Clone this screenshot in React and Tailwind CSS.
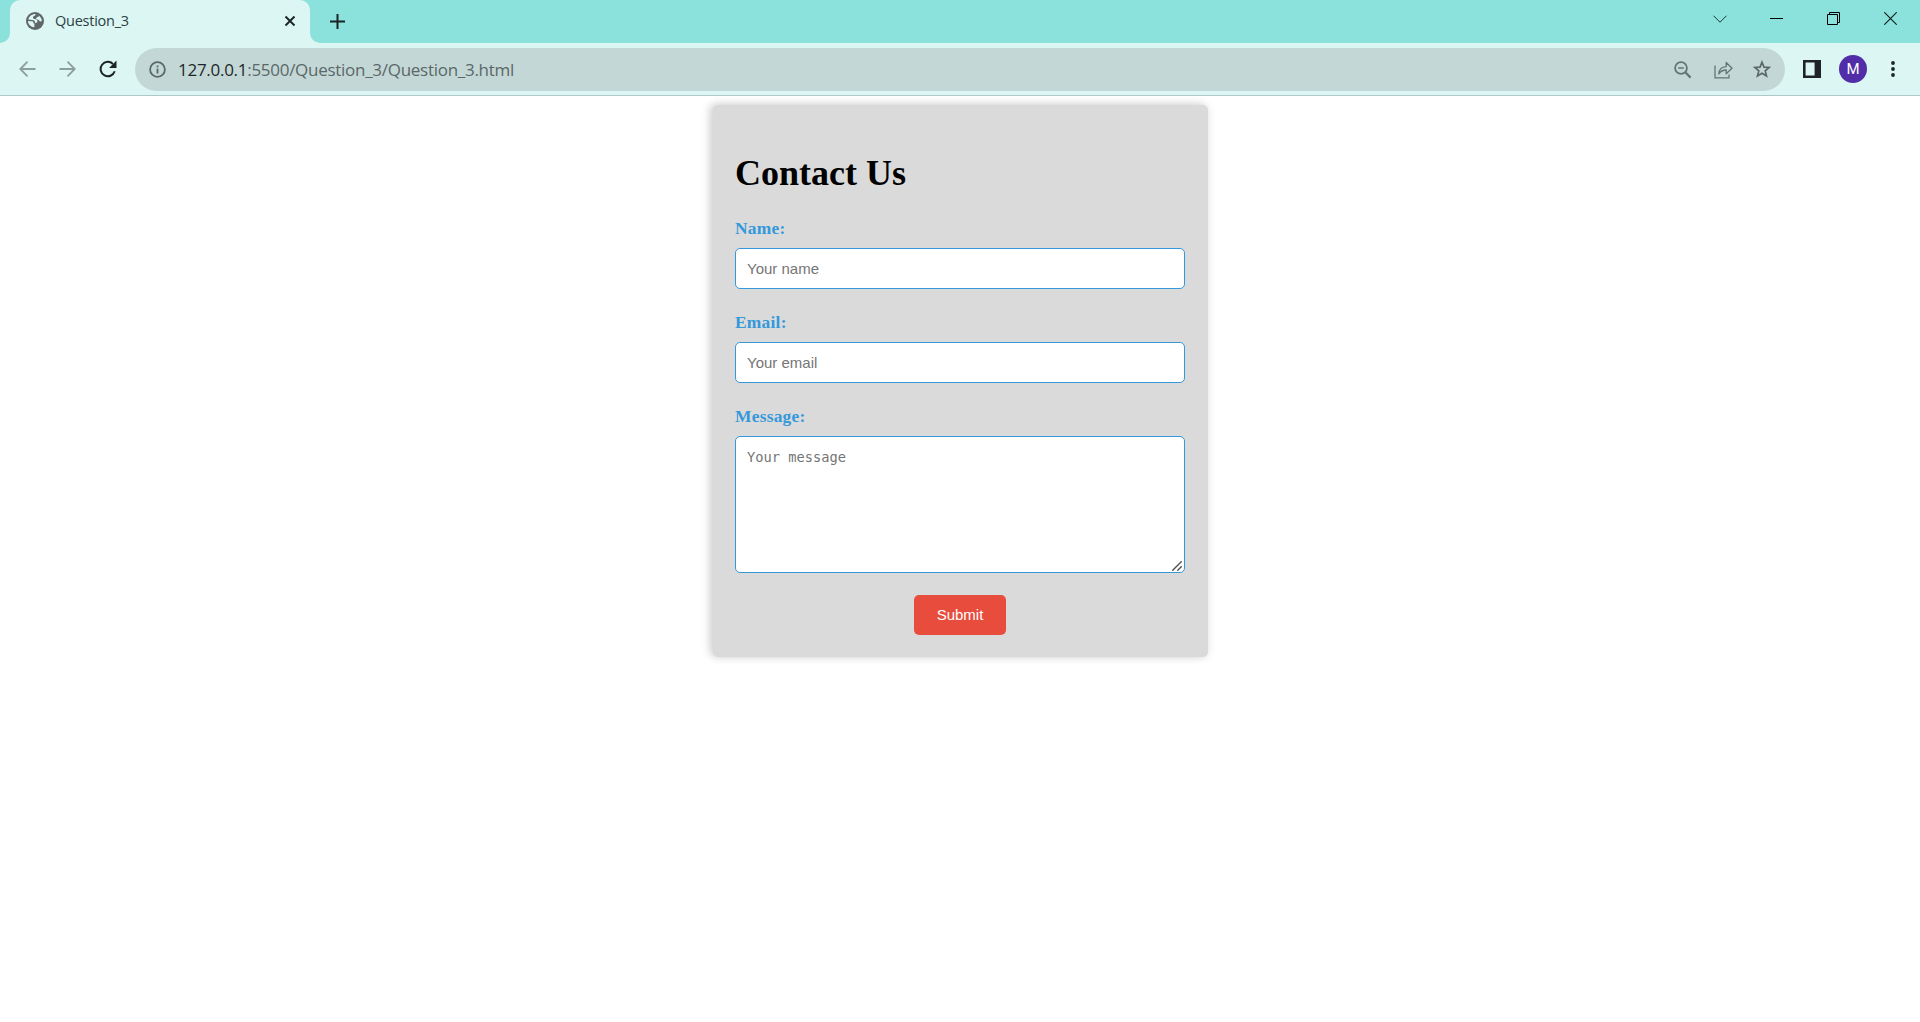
const uiFont = "font-['Open_Sans','Noto_Sans',sans-serif]";

function TabStrip() {
  return (
    <div className="flex h-[43px] items-end bg-[#8be1db]">
      <div className="h-[43px] w-[10px] bg-[#dcf6f4]">
        <div className="h-full rounded-br-[10px] bg-[#8be1db]" />
      </div>
      <div className="flex h-[43px] w-[300px] items-center rounded-t-[10px] bg-[#dcf6f4] pr-[13px] pb-px pl-[16px]">
        <svg width="18" height="18" viewBox="0 0 18 18" className="shrink-0">
          <circle cx="9" cy="9" r="9" fill="#5f6569" />
          <path d="M9.600 2c-.2 1-.5 1.700-1.300 2.100-.9.400-1.300.7-1.300 1.500 0 .9.500 1.300 1.500 1.400 1.900.1 2.800.8 2.900 2.200.1 1-.5 1.500-1.500 1.600-.9.100-1.500.6-1.500 1.700v2.700C4.700 15 2.100 12.600 2 9l3.400.2c1.300 0 1.900.4 1.900 1.300 0 .7.400 1 1 1 .6 0 .8-.4.8-1-.1-1.600-1-2.400-2.600-2.500L2.300 7.500C3 4.400 5.700 2 9.600 2z" fill="#dcf6f4" />
          <path d="M12.600 3.400c2 1.300 3.200 3.300 3.300 5.600-.9.600-2 .5-2.600-.3-.5-.8-1.300-1-2.200-1.200-.9-.3-1.200-1-.8-1.700.4-.6 1-.6 1.600-.8.700-.2.900-.7.700-1.600z" fill="#dcf6f4" />
        </svg>
        <span className={`ml-[11px] flex-1 text-[14.5px] leading-5 tracking-[-0.250px] text-[#2c3f3f] ${uiFont}`}>Question_3</span>
        <svg width="14" height="14" viewBox="0 0 14 14" stroke="#1b2424" strokeWidth="1.9">
          <path d="M2.500 2.500l9 9M11.500 2.500l-9 9" />
        </svg>
      </div>
      <div className="h-[43px] w-[10px] bg-[#dcf6f4]">
        <div className="h-full rounded-bl-[10px] bg-[#8be1db]" />
      </div>
      <div className="flex h-[43px] flex-1 items-center justify-between pl-[10px]">
        <svg width="15" height="15" viewBox="0 0 15 15" stroke="#1b2424" strokeWidth="2" className="-mt-px">
          <path d="M7.500 0v15M0 7.500h15" />
        </svg>
        <div className="flex h-[37px] self-start">
          <div className="flex w-[57px] items-center justify-center">
            <svg width="14" height="8" viewBox="0 0 14 8" fill="none" stroke="#1d3b39" strokeWidth="1"><path d="M.5.700L7 7.200 13.500.700" /></svg>
          </div>
          <div className="flex w-[57px] items-center justify-center">
            <div className="h-px w-[13px] bg-black" />
          </div>
          <div className="flex w-[57px] items-center justify-center">
            <svg width="13" height="13" viewBox="0 0 13 13" fill="none" stroke="#000" strokeWidth="1">
              <path d="M.5 2.500h10v10H.5zM2.500 2.500v-2h10v10h-2" />
            </svg>
          </div>
          <div className="flex w-[57px] items-center justify-center">
            <svg width="13" height="13" viewBox="0 0 13 13" fill="none" stroke="#0c1c1b" strokeWidth="1.100">
              <path d="M.3.300l12.400 12.400M12.700.300L.3 12.700" />
            </svg>
          </div>
          <div className="w-px" />
        </div>
      </div>
    </div>
  );
}

function Toolbar() {
  return (
    <div className="flex h-[53px] items-start border-b border-[#afc9c8] bg-[#dcf6f4] pt-[5px]">
      <div className="flex h-[43px] w-[135px] shrink-0 items-center pl-[19px]">
        <svg width="17" height="16" viewBox="0 0 17 16" fill="none" stroke="#8c9e9e" strokeWidth="1.800" className="-mt-0.5">
          <path d="M16.500 8H1.500M8.500.700L1.300 8l7.200 7.300" />
        </svg>
        <svg width="17" height="16" viewBox="0 0 17 16" fill="none" stroke="#8c9e9e" strokeWidth="1.800" className="-mt-0.5 ml-[23px]">
          <path d="M.5 8h15M8.500.700L15.700 8l-7.200 7.300" />
        </svg>
        <svg width="18" height="18" viewBox="0 0 18 18" fill="none" className="-mt-0.5 ml-[23px]">
          <path d="M15.700 11.300A7.200 7.200 0 1 1 14 4" stroke="#1b2424" strokeWidth="2" />
          <path d="M17.500.600v7.400h-7.400z" fill="#1b2424" />
        </svg>
      </div>
      <div className="flex h-[43px] w-[1650px] shrink-0 items-center rounded-full bg-[#c3d8d6] pr-[13px] pl-[14px]">
        <svg width="17" height="17" viewBox="0 0 17 17" fill="none" stroke="#5b6768" strokeWidth="1.800">
          <circle cx="8.500" cy="8.500" r="7.400" />
          <path d="M8.500 7.500v5M8.500 4.400v1.800" />
        </svg>
        <span className={`ml-[12px] flex-1 text-[17px] leading-6 tracking-[-0.280px] text-[#5b6768] ${uiFont}`}>
          <span className="text-[#1e2727]">127.0.0.1</span>:5500/Question_3/Question_3.html
        </span>
        <svg width="18" height="18" viewBox="0 0 18 18" fill="none" stroke="#657374" strokeWidth="1.800">
          <circle cx="7" cy="7" r="5.900" />
          <path d="M4.200 7h5.600" strokeWidth="1.500" />
          <path d="M11.300 11.300l5.300 5.300" strokeWidth="2.200" />
        </svg>
        <svg width="19" height="18" viewBox="0 0 19 18" fill="none" stroke="#657374" strokeWidth="1.300" className="ml-[22px]">
          <path d="M1 4.500v12.400h14v-3.400" />
          <path d="M4.800 13c.3-4.600 3-7.200 7.400-7.400V1.500L18 7.300l-5.800 5.500V9c-3.300 0-5.700 1.300-7.400 4z" strokeLinejoin="round" />
        </svg>
        <svg width="18" height="18" viewBox="0 0 18 18" fill="none" stroke="#5b6768" strokeWidth="1.700" className="-mt-px ml-[20px]">
          <path d="M9 2.200l2 4.900 5.200.4-4 3.400 1.300 5.100L9 13.200 4.500 16l1.300-5.100-4-3.400L7 7.100z" />
        </svg>
        <div className="w-px" />
      </div>
      <div className="flex h-[42px] flex-1 items-center pl-[18px]">
        <svg width="18" height="18" viewBox="0 0 18 18">
          <path d="M0 0h18v18H0zM2.600 2.600v12.800h9V2.600z" fillRule="evenodd" fill="#1d2326" />
        </svg>
        <div className="ml-[18px] flex size-[28px] items-center justify-center rounded-full bg-[#512da8] font-['Roboto',sans-serif] text-[15px] text-white">M</div>
        <svg width="4" height="16" viewBox="0 0 4 16" fill="#1d2326" className="ml-[24px]">
          <circle cx="2" cy="2" r="1.900" />
          <circle cx="2" cy="8" r="1.900" />
          <circle cx="2" cy="14" r="1.900" />
        </svg>
      </div>
    </div>
  );
}

const labelClass =
  "block h-[20px] pt-px font-['Liberation_Serif',serif] text-[17.400px] leading-[19px] font-bold tracking-[0.250px] text-[#3498db]";
const fieldClass =
  "block w-full rounded-[5px] border border-[#3498db] bg-white px-[11px] text-[15px] text-black outline-none placeholder:text-[#757575] placeholder:opacity-100";

function ContactForm() {
  return (
    <form className="mx-auto mt-[9px] h-[552px] w-[495px] rounded-[5px] bg-[#dadada] pr-[22.500px] pl-[22.500px] pt-[44px] shadow-[-4px_-1px_9px_rgba(0,0,0,0.13),0_0_10px_rgba(0,0,0,0.1)]">
      <h1 className="h-[48px] font-['Liberation_Serif',serif] text-[36px] leading-[48px] font-bold text-black">Contact Us</h1>
      <label className="mt-[21px] block">
        <span className={labelClass}>Name:</span>
        <input type="text" placeholder="Your name" className={`mt-[10px] h-[41px] font-['Liberation_Sans',sans-serif] ${fieldClass}`} />
      </label>
      <label className="mt-[23px] block">
        <span className={labelClass}>Email:</span>
        <input type="email" placeholder="Your email" className={`mt-[10px] h-[41px] font-['Liberation_Sans',sans-serif] ${fieldClass}`} />
      </label>
      <label className="relative mt-[23px] block">
        <span className={labelClass}>Message:</span>
        <textarea
          placeholder="Your message"
          className="mt-[10px] block h-[137px] w-full resize-none rounded-[5px] border border-[#3498db] bg-white px-[11px] pt-[11px] font-['DejaVu_Sans_Mono',monospace] text-[13.700px] leading-[18px] outline-none placeholder:text-[#757575] placeholder:opacity-100"
        />
        <svg width="10" height="10" viewBox="0 0 10 10" stroke="#505050" strokeWidth="1.400" className="absolute right-[3px] bottom-[2px]">
          <path d="M.3 9.700L9.700.300M5.300 9.700l4.400-4.400" />
        </svg>
      </label>
      <button type="button" className="mx-auto mt-[22px] block h-[40px] w-[92px] rounded-[5px] bg-[#e74c3c] font-['Liberation_Sans',sans-serif] text-[15px] text-white">
        Submit
      </button>
    </form>
  );
}

export default function App() {
  return (
    <div className="h-[1022px] w-[1920px] overflow-hidden bg-white">
      <TabStrip />
      <Toolbar />
      <ContactForm />
    </div>
  );
}
